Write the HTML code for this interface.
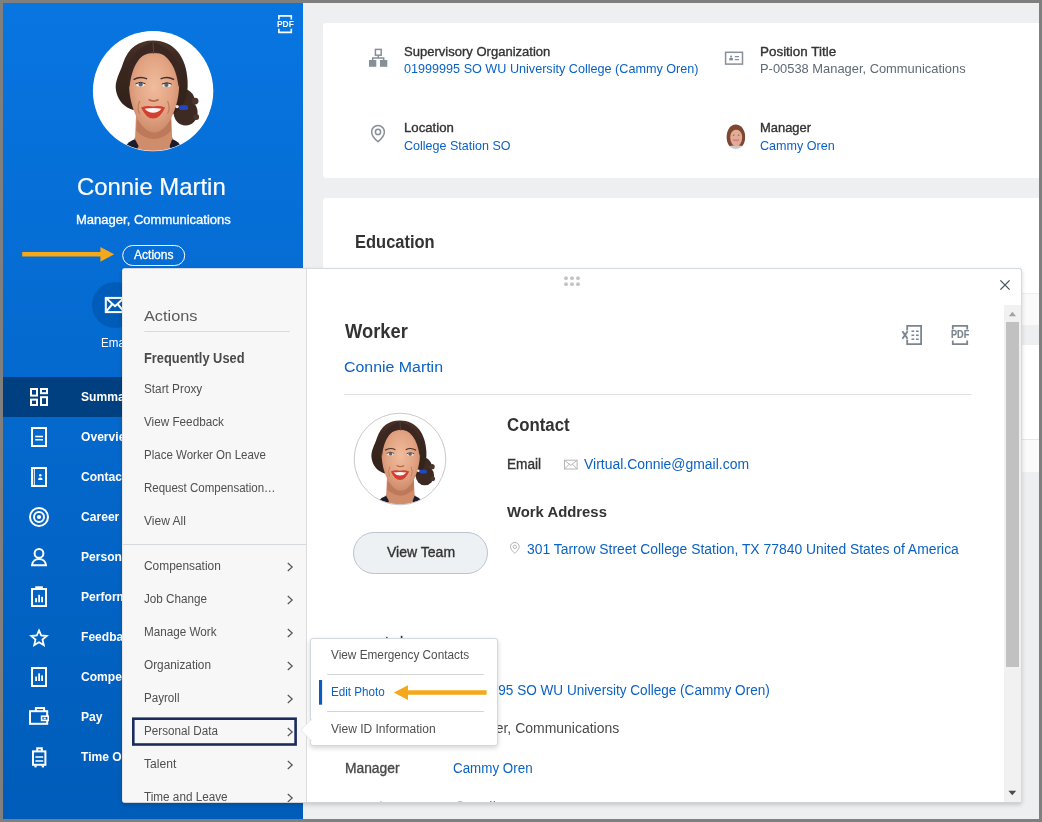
<!DOCTYPE html>
<html>
<head>
<meta charset="utf-8">
<title>Worker Profile</title>
<style>
*{box-sizing:border-box;margin:0;padding:0}
html,body{width:1042px;height:822px;overflow:hidden;background:#7f7f7f;font-family:"Liberation Sans",sans-serif;}
#frame{position:absolute;left:3px;top:3px;width:1036px;height:816px;overflow:hidden;background:#edeff1;}
.t{position:absolute;white-space:nowrap;line-height:1;display:inline-block;transform-origin:0 50%;}
.layer{position:absolute;left:0;top:0;}
svg{position:absolute;left:0;top:0;overflow:visible}
#side{position:absolute;left:0;top:0;width:300px;height:816px;background:linear-gradient(180deg,#0875e1 0%,#005cb9 100%);overflow:hidden}
.card{position:absolute;background:#fff;border-radius:3px 0 0 3px}
#pop{position:absolute;left:119px;top:265px;width:900px;height:535px;background:#fff;border-radius:3px;border:1px solid #d5dae0;border-left-color:#e9e7e6;border-bottom-color:#cfd2d6;box-shadow:0 2px 4px rgba(0,0,0,.17);overflow:hidden}
#menu{position:absolute;left:0;top:0;width:183px;height:533px;background:#f7f7f7;}
#menuline{position:absolute;left:183px;top:0;width:1px;height:533px;background:#dcdcdc}
#sub{position:absolute;left:307px;top:635px;width:188px;height:108px;background:#fff;border-radius:3px;border:1px solid #d4d9e0;box-shadow:0 2px 5px rgba(0,0,0,.17);}
#btn{position:absolute;left:230px;top:263px;width:135px;height:42px;border-radius:21px;background:#eef1f3;border:1px solid #bcc4cf}
</style>
</head>
<body>
<svg width="0" height="0" style="position:absolute">
  <defs>
    <filter id="soft" x="-10%" y="-10%" width="120%" height="120%"><feGaussianBlur stdDeviation="0.7"/></filter>
    <filter id="soft2" x="-10%" y="-10%" width="120%" height="120%"><feGaussianBlur stdDeviation="0.5"/></filter>
    <radialGradient id="sking" cx="50%" cy="42%" r="62%">
      <stop offset="0" stop-color="#f0bc9d"/><stop offset=".6" stop-color="#e2a382"/><stop offset="1" stop-color="#c98867"/>
    </radialGradient>
    <linearGradient id="hairg" x1="0" y1="0" x2="0" y2="1">
      <stop offset="0" stop-color="#4a3128"/><stop offset=".4" stop-color="#38261f"/><stop offset="1" stop-color="#33231d"/>
    </linearGradient>
    <clipPath id="cc"><circle cx="70" cy="70" r="59.6"/></clipPath>
    <symbol id="connie" viewBox="0 0 140 140">
      <g clip-path="url(#cc)">
        <rect width="140" height="140" fill="#fff"/>
        <g filter="url(#soft)">
          <!-- bun + wisps -->
          <ellipse cx="102.5" cy="91.5" rx="12" ry="13" fill="#3d2a22"/>
          <path d="M98 66 Q113 70 112 84 Q106 77 97 80Z" fill="#3d2a22"/>
          <circle cx="112" cy="80" r="3.4" fill="#4a342a"/>
          <circle cx="113" cy="96" r="3" fill="#4a342a"/>
          <!-- hair -->
          <path d="M70 19.5 C55 19.5 45 27 40 42 C37 52 31 60 33 70 C35 80 41 86 50 89 L90 93 C100 88 105.5 76 104.5 60 C103.5 36 91 19.5 70 19.5Z" fill="url(#hairg)"/>
          <!-- neck / chest -->
          <path d="M53 92 L52 116 L42 134 L100 134 L89 116 L88 92Z" fill="#d08d6c"/>
          <path d="M54 98 Q71 120 88 98 L88 110 Q71 126 53 110Z" fill="#b06c4e" opacity=".6"/>
          <!-- clothes -->
          <path d="M38 134 C41 125 46 119.5 52 118.5 L55.5 125 L51 134Z" fill="#1b1e2e"/>
          <path d="M102 134 C99 125 95 119.5 89 118.5 L86.5 125 L90 134Z" fill="#1b1e2e"/>
          <!-- face -->
          <path d="M71 32 C56 32 46 44 46 64 C46 85 57 111.5 71 111.5 C85 111.5 96 85 96 64 C96 44 86 32 71 32Z" fill="url(#sking)"/>
          <!-- hairline over forehead -->
          <path d="M70 30 C58 32 49 43 46.5 66 C41 52 44 30 70 21 C96 30 100 52 95.5 66 C93 43 83 32 70 30Z" fill="#3a2821"/>
          <path d="M70 21 L70.6 33" stroke="#6a4a3a" stroke-width=".8"/>
          <!-- brows / eyes -->
          <path d="M50.5 58.5 Q57 54.5 64 57.8" stroke="#4a2f25" stroke-width="1.5" fill="none"/>
          <path d="M77.5 57.8 Q84 54.5 91 58.5" stroke="#4a2f25" stroke-width="1.5" fill="none"/>
          <ellipse cx="57.3" cy="63.3" rx="4.3" ry="2.2" fill="#f3e9e4"/>
          <ellipse cx="83.6" cy="63.8" rx="4.3" ry="2.2" fill="#f3e9e4"/>
          <circle cx="57.6" cy="63.3" r="2.1" fill="#51677f"/>
          <circle cx="83.3" cy="63.8" r="2.1" fill="#51677f"/>
          <path d="M52.5 62.6 Q57.3 59.8 62.3 62.6" stroke="#3a2821" stroke-width="1" fill="none"/>
          <path d="M78.8 63 Q83.6 60.2 88.6 63" stroke="#3a2821" stroke-width="1" fill="none"/>
          <!-- nose + smile lines -->
          <path d="M65.5 78.5 Q70.5 81.5 75.5 78.5" stroke="#b06a4a" stroke-width="1.7" fill="none"/>
          <path d="M56.5 80 Q53.5 87 56.5 93" stroke="#c07c5c" stroke-width="1.2" fill="none"/>
          <path d="M84.5 80 Q87.5 87 84.5 93" stroke="#c07c5c" stroke-width="1.2" fill="none"/>
          <!-- mouth -->
          <path d="M58 86.3 Q64 84 70 85.3 Q76 84 82 86.3 Q77 97.5 70 97.5 Q63 97.5 58 86.3Z" fill="#d23f31"/>
          <path d="M61.5 87.6 Q70 86.4 78.5 87.6 Q75 91.6 70 91.6 Q65 91.6 61.5 87.6Z" fill="#fdf6f2"/>
          <!-- earring -->
          <rect x="96" y="84.2" width="9" height="4.8" rx="1.8" fill="#2447c0"/>
          <circle cx="94" cy="85.5" r="1.7" fill="#e9e9ee"/>
        </g>
      </g>
    </symbol>
    <symbol id="cammy" viewBox="0 0 20 26">
      <clipPath id="cm"><path d="M10 .6C15.4 .6 19.6 6 19.6 13.5C19.6 20 16 25.6 10 25.6C4 25.6 .6 20 .6 13.5C.6 6 4.6 .6 10 .6Z"/></clipPath>
      <g clip-path="url(#cm)"><g filter="url(#soft2)">
        <rect width="20" height="26" fill="#7d4730"/>
        <path d="M2 24 Q4 21.5 8 22 L12.5 22 Q16.5 21.5 18.5 24 L18.5 27 L2 27Z" fill="#c9c9cc"/>
        <ellipse cx="10.4" cy="13.6" rx="6.1" ry="9.2" fill="#e3ab93"/>
        <path d="M3.5 12 Q4.5 3.6 10.4 3.8 Q16 3.6 17.2 12 Q14.5 5.8 10.4 6 Q6.5 5.8 3.5 12Z" fill="#7d4730"/>
        <path d="M7.4 16.2 Q10.4 18.2 13.300 16.2 Q10.4 17 7.4 16.2Z" fill="#f2d8dc" stroke="#cf5f78" stroke-width=".7"/>
        <ellipse cx="7.8" cy="11.4" rx=".9" ry=".55" fill="#6a6f78"/><ellipse cx="12.9" cy="11.4" rx=".9" ry=".55" fill="#6a6f78"/>
      </g></g>
    </symbol>
  </defs>
</svg>

<div id="frame">

<!-- ===== background cards ===== -->
<div class="card" style="left:320px;top:20px;width:716px;height:155px;"></div>
<div class="card" style="left:320px;top:195px;width:716px;height:274px;">
  <div style="position:absolute;left:0;top:95px;width:716px;height:32px;background:#fafafa;border-top:1px solid #eceef0"></div>
  <div style="position:absolute;left:0;top:127px;width:716px;height:20px;background:#edeff1"></div>
  <div style="position:absolute;left:0;top:241px;width:716px;height:33px;background:#fafafa;border-top:1px solid #e6e8ea"></div>
</div>
<svg class="layer" width="1036" height="816" viewBox="3 3 1036 816">
  <g fill="none" stroke="#878f98" stroke-width="1.5">
    <!-- org icon -->
    <rect x="375.4" y="49.4" width="5.8" height="5.8"/>
    <path d="M378.3 56V58.1M372.7 60V58.1H383.7V60"/>
    <rect x="369" y="60" width="7.3" height="6.8" fill="#878f98" stroke="none"/>
    <rect x="380" y="60" width="7.3" height="6.8" fill="#878f98" stroke="none"/>
    <!-- location pin -->
    <path d="M378 141.6C378 141.6 371.6 136.4 371.6 131.9A6.4 6.4 0 0 1 384.4 131.9C384.4 136.4 378 141.6 378 141.6Z"/>
    <circle cx="378" cy="131.9" r="2.6"/>
    <!-- id card -->
    <rect x="725.6" y="52.3" width="16.9" height="11.8"/>
    <path d="M734.8 56.6H739M734.8 59.6H739" stroke-width="1.3"/>
    <rect x="729.2" y="58" width="3.8" height="2.4" fill="#878f98" stroke="none"/>
    <circle cx="731.1" cy="56.6" r="1.1" fill="#878f98" stroke="none"/>
  </g>
  <use href="#cammy" x="726" y="124" width="19.6" height="25.4"/>
</svg>
<span class="t" style="left:401.4px;top:42px;font-size:13px;color:#333;transform:scaleX(1.0023);-webkit-text-stroke:0.35px currentColor;">Supervisory Organization</span>
<span class="t" style="left:401.4px;top:59px;font-size:13px;color:#0b62c4;transform:scaleX(0.9705);">01999995 SO WU University College (Cammy Oren)</span>
<span class="t" style="left:757.2px;top:42px;font-size:13px;color:#333;transform:scaleX(1.0325);-webkit-text-stroke:0.35px currentColor;">Position Title</span>
<span class="t" style="left:757.2px;top:59px;font-size:13px;color:#5e6a75;transform:scaleX(0.9914);">P-00538 Manager, Communications</span>
<span class="t" style="left:401.4px;top:118px;font-size:13px;color:#333;transform:scaleX(1.0151);-webkit-text-stroke:0.35px currentColor;">Location</span>
<span class="t" style="left:401.4px;top:136px;font-size:13px;color:#0b62c4;transform:scaleX(0.9640);">College Station SO</span>
<span class="t" style="left:757.2px;top:118px;font-size:13px;color:#333;transform:scaleX(0.9939);-webkit-text-stroke:0.35px currentColor;">Manager</span>
<span class="t" style="left:757.2px;top:136px;font-size:13px;color:#0b62c4;transform:scaleX(0.9677);">Cammy Oren</span>
<span class="t" style="left:352.1px;top:230px;font-size:18px;color:#333;font-weight:bold;transform:scaleX(0.9159);">Education</span>

<!-- ===== sidebar ===== -->
<div id="side">
  <div style="position:absolute;left:0;top:374px;width:300px;height:40px;background:#004080"></div>
  <svg width="300" height="816" viewBox="3 3 300 816">
    <!-- avatar -->
    <circle cx="153.1" cy="91.1" r="60.2" fill="#fff"/>
    <use href="#connie" x="83.1" y="21.1" width="140" height="140"/>
    <!-- pdf icon -->
    <g fill="none" stroke="#fff" stroke-width="1.6">
      <path d="M278.9 19.6V15.9H291.3V19.6M278.9 28.8V32.4H291.3V28.8"/>
    </g>
    <!-- arrow 1 -->
    <path d="M22.2 252.1H100.4V247L114.2 254.3L100.4 261.7V256.6H22.2Z" fill="#f4a81a"/>
    <!-- actions pill -->
    <rect x="122.7" y="245.5" width="62" height="20" rx="10" fill="none" stroke="#fff" stroke-width="1"/>
    <!-- email circle -->
    <circle cx="115" cy="305" r="23" fill="#005cb9"/>
    <g fill="none" stroke="#fff" stroke-width="2">
      <rect x="105.8" y="297.9" width="18.4" height="14.2"/>
      <path d="M105.7 297.8L115 306.2L124.3 297.8M105.7 312.2L112.4 304M124.3 312.2L117.6 304"/>
    </g>
    <!-- nav icons -->
    <g fill="none" stroke="#fff" stroke-width="2">
      <!-- summary -->
      <rect x="31" y="389" width="6" height="6.6"/>
      <rect x="41" y="389" width="6" height="4.2"/>
      <rect x="31" y="399.6" width="6" height="5.4"/>
      <rect x="41" y="397.2" width="6" height="7.8"/>
      <!-- overview -->
      <rect x="32" y="428" width="14" height="18"/>
      <path d="M35.2 436.5H43M35.2 439.8H43" stroke-width="1.5"/>
      <!-- contact -->
      <rect x="32" y="468" width="14" height="18"/>
      <path d="M34.3 468V486" stroke-width="1"/>
      <!-- career -->
      <circle cx="39" cy="517" r="9"/>
      <circle cx="39" cy="517" r="5"/>
      <!-- personal -->
      <circle cx="39" cy="553.4" r="4.4"/>
      <path d="M32 565.2C32.8 556.9 45.2 556.9 46 565.2Z" stroke-linejoin="miter"/>
      <!-- performance -->
      <rect x="32" y="589" width="14" height="17"/>
      <!-- feedback star -->
      <path d="M39.0 630.4L41.2 635.5L46.7 636.0L42.5 639.6L43.8 645.1L39.0 642.2L34.2 645.1L35.5 639.6L31.3 636.0L36.8 635.5Z" stroke-width="1.8"/>
      <!-- compensation -->
      <rect x="32" y="668" width="14" height="18"/>
      <!-- pay -->
      <rect x="30" y="711.2" width="17.2" height="12.6"/>
      <path d="M35.9 711V708H44.1V711"/>
      <rect x="41.6" y="716.2" width="6.6" height="4.2" stroke-width="1.6" fill="#005fbe"/>
      <!-- time off -->
      <rect x="33" y="751.4" width="12.4" height="13.4"/>
      <path d="M37.2 751V748.2H41.8V751"/>
      <path d="M35.4 757H43.2M35.4 761H43.2" stroke-width="1.6"/>
    </g>
    <g fill="#fff">
      <circle cx="39" cy="517" r="2.1"/>
      <circle cx="40.3" cy="475.2" r="1.3"/>
      <path d="M38.2 480V478.6Q40.3 476.6 42.4 478.6V480Z"/>
      <rect x="35.2" y="586.3" width="7.6" height="3.2"/>
      <rect x="35.2" y="598.1" width="1.8" height="4.2"/><rect x="38.2" y="594.8" width="1.8" height="7.5"/><rect x="41.2" y="596.8" width="1.8" height="5.5"/>
      <rect x="35.2" y="676.6" width="1.8" height="4.4"/><rect x="38.2" y="673.4" width="1.8" height="7.6"/><rect x="41.2" y="675.4" width="1.8" height="5.6"/>
      <rect x="34.4" y="765.6" width="2.2" height="1.8"/><rect x="41.8" y="765.6" width="2.2" height="1.8"/>
      <rect x="43.6" y="717.6" width="2.2" height="1.6"/>
    </g>
  </svg>
<span class="t" style="left:74.3px;top:172px;font-size:24px;color:#fff;transform:scaleX(0.9953);-webkit-text-stroke:0.2px currentColor;">Connie Martin</span>
<span class="t" style="left:72.6px;top:210px;font-size:13px;color:#fff;transform:scaleX(1.0015);-webkit-text-stroke:0.3px currentColor;">Manager, Communications</span>
<span class="t" style="left:131.0px;top:246px;font-size:12px;color:#fff;transform:scaleX(1.0036);-webkit-text-stroke:0.3px currentColor;">Actions</span>
<span class="t" style="left:97.8px;top:334px;font-size:12px;color:#fff;transform:scaleX(0.9662);">Email</span>
<span class="t" style="left:273.8px;top:17px;font-size:8.4px;color:#fff;font-weight:bold;transform:scaleX(1.0030);">PDF</span>
<span class="t" style="left:78.2px;top:387px;font-size:13px;color:#fff;font-weight:bold;transform:scaleX(0.9300);">Summary</span>
<span class="t" style="left:78.2px;top:427px;font-size:13px;color:#fff;font-weight:bold;transform:scaleX(0.9300);">Overview</span>
<span class="t" style="left:78.2px;top:467px;font-size:13px;color:#fff;font-weight:bold;transform:scaleX(0.9300);">Contact</span>
<span class="t" style="left:78.2px;top:507px;font-size:13px;color:#fff;font-weight:bold;transform:scaleX(0.9300);">Career</span>
<span class="t" style="left:78.2px;top:547px;font-size:13px;color:#fff;font-weight:bold;transform:scaleX(0.9300);">Personal</span>
<span class="t" style="left:78.2px;top:587px;font-size:13px;color:#fff;font-weight:bold;transform:scaleX(0.9300);">Performance</span>
<span class="t" style="left:78.2px;top:627px;font-size:13px;color:#fff;font-weight:bold;transform:scaleX(0.9300);">Feedback</span>
<span class="t" style="left:78.2px;top:667px;font-size:13px;color:#fff;font-weight:bold;transform:scaleX(0.9300);">Compensation</span>
<span class="t" style="left:78.2px;top:707px;font-size:13px;color:#fff;font-weight:bold;transform:scaleX(0.9300);">Pay</span>
<span class="t" style="left:78.2px;top:747px;font-size:13px;color:#fff;font-weight:bold;transform:scaleX(0.9300);">Time Off</span>
</div>

<!-- ===== actions popup ===== -->
<div id="pop">
  <div id="menu"></div>
  <div id="menuline"></div>
  <div id="btn"></div>
  <svg width="898" height="533" viewBox="123 269 898 533">
    <!-- menu lines -->
    <path d="M144.4 331.5H290" stroke="#dadada" stroke-width="1"/>
    <path d="M122 544.5H306" stroke="#d6d9dc" stroke-width="1"/>
    <!-- chevrons -->
    <g fill="none" stroke="#555" stroke-width="1.2">
      <path d="M287.8 563L292.2 567L287.8 571"/>
      <path d="M287.8 596L292.2 600L287.8 604"/>
      <path d="M287.8 629L292.2 633L287.8 637"/>
      <path d="M287.8 662L292.2 666L287.8 670"/>
      <path d="M287.8 695L292.2 699L287.8 703"/>
      <path d="M287.8 728L292.2 732L287.8 736"/>
      <path d="M287.8 761L292.2 765L287.8 769"/>
      <path d="M287.8 794L292.2 798L287.8 802"/>
    </g>
    <!-- focus box -->
    <rect x="133.3" y="718.7" width="162.3" height="25.8" fill="none" stroke="#1b2b5c" stroke-width="2.6"/>
    <!-- drag dots -->
    <g fill="#c4c4c4">
      <circle cx="566" cy="278.2" r="1.9"/><circle cx="572" cy="278.2" r="1.9"/><circle cx="578" cy="278.2" r="1.9"/>
      <circle cx="566" cy="284.2" r="1.9"/><circle cx="572" cy="284.2" r="1.9"/><circle cx="578" cy="284.2" r="1.9"/>
    </g>
    <!-- close X -->
    <path d="M1000.4 280.4L1009.6 289.6M1009.6 280.4L1000.4 289.6" stroke="#48525e" stroke-width="1.3" fill="none"/>
    <!-- scrollbar -->
    <rect x="1004" y="305" width="17" height="497" fill="#f1f1f1"/>
    <rect x="1006" y="322" width="13" height="345" fill="#c1c1c1"/>
    <path d="M1008.8 316.3H1016L1012.4 311.8Z" fill="#a3a3a3"/>
    <path d="M1008.4 790.8H1016.2L1012.3 795.2Z" fill="#4d4d4d"/>
    <rect x="490.2" y="801" width="1.3" height="1" fill="#3f7fd0"/><rect x="493.7" y="801" width="1.3" height="1" fill="#3f7fd0"/>
    <rect x="386" y="636.8" width="1.6" height="1.2" fill="#555"/><rect x="400.8" y="635.8" width="1.6" height="2.2" fill="#333"/>
    <!-- header rule -->
    <path d="M344 394.5H971.5" stroke="#dfe3e8" stroke-width="1"/>
    <!-- excel icon -->
    <g fill="none" stroke="#7b858f" stroke-width="1.8">
      <path d="M907.2 330.4V325.8H921.1V344.2H907.2V339.6"/>
      <path d="M911.5 331.3H914.2M916 331.3H918.7M911.5 335.2H914.2M916 335.2H918.7M911.5 339.2H914.2M916 339.2H918.7" stroke-width="1.6"/>
      <path d="M902.4 331.2L907.6 338.8M907.6 331.2L902.4 338.8" stroke-width="1.9"/>
      <!-- pdf icon -->
      <path d="M952.8 329.6V325.8H967.2V329.6M952.8 340.4V344.2H967.2V340.4"/>
    </g>
    <!-- photo -->
    <use href="#connie" x="346.5" y="405.5" width="107" height="107"/>
    <circle cx="400" cy="459" r="45.8" fill="none" stroke="#c9c9c9" stroke-width="1"/>
    <!-- small envelope -->
    <g fill="none" stroke="#b5b5b5" stroke-width="1">
      <rect x="564.5" y="460.2" width="12.6" height="8.8"/>
      <path d="M564.5 460.2L570.8 465.4L577.1 460.2M564.5 469L569.2 464.2M577.1 469L572.4 464.2"/>
      <!-- small pin -->
      <path d="M514.8 553.4C514.8 553.4 510.4 549.6 510.4 546.8A4.4 4.4 0 0 1 519.2 546.8C519.2 549.6 514.8 553.4 514.8 553.4Z"/>
      <circle cx="514.8" cy="546.8" r="1.7"/>
      <path d="M460.1 812.4C460.1 812.4 455.7 808.6 455.7 805.8A4.4 4.4 0 0 1 464.5 805.8C464.5 808.6 460.1 812.4 460.1 812.4Z"/>
    </g>
  </svg>
<span class="t" style="left:21.4px;top:39px;font-size:15px;color:#5a5a5a;transform:scaleX(1.0853);">Actions</span>
<span class="t" style="left:21.4px;top:82px;font-size:14px;color:#4a4a4a;font-weight:bold;transform:scaleX(0.9161);">Frequently Used</span>
<span class="t" style="left:21.4px;top:114px;font-size:12px;color:#4f4f4f;transform:scaleX(0.9805);">Start Proxy</span>
<span class="t" style="left:21.4px;top:147px;font-size:12px;color:#4f4f4f;transform:scaleX(0.9764);">View Feedback</span>
<span class="t" style="left:21.4px;top:180px;font-size:12px;color:#4f4f4f;transform:scaleX(0.9593);">Place Worker On Leave</span>
<span class="t" style="left:21.4px;top:213px;font-size:12px;color:#4f4f4f;transform:scaleX(0.9576);">Request Compensation…</span>
<span class="t" style="left:21.4px;top:246px;font-size:12px;color:#4f4f4f;transform:scaleX(1.0021);">View All</span>
<span class="t" style="left:21.4px;top:291px;font-size:12px;color:#4f4f4f;transform:scaleX(0.9924);">Compensation</span>
<span class="t" style="left:21.4px;top:324px;font-size:12px;color:#4f4f4f;transform:scaleX(0.9734);">Job Change</span>
<span class="t" style="left:21.4px;top:357px;font-size:12px;color:#4f4f4f;transform:scaleX(0.9747);">Manage Work</span>
<span class="t" style="left:21.4px;top:390px;font-size:12px;color:#4f4f4f;transform:scaleX(0.9846);">Organization</span>
<span class="t" style="left:21.4px;top:423px;font-size:12px;color:#4f4f4f;transform:scaleX(0.9676);">Payroll</span>
<span class="t" style="left:21.4px;top:456px;font-size:12px;color:#4f4f4f;transform:scaleX(0.9731);">Personal Data</span>
<span class="t" style="left:21.4px;top:489px;font-size:12px;color:#4f4f4f;transform:scaleX(1.0084);">Talent</span>
<span class="t" style="left:21.4px;top:522px;font-size:12px;color:#4f4f4f;transform:scaleX(0.9765);">Time and Leave</span>
<span class="t" style="left:827.9px;top:61px;font-size:10.2px;color:#7b858f;font-weight:bold;transform:scaleX(0.8982);-webkit-text-stroke:0.2px currentColor;">PDF</span>
<span class="t" style="left:222.0px;top:52px;font-size:20px;color:#333;font-weight:bold;transform:scaleX(0.9162);">Worker</span>
<span class="t" style="left:221.4px;top:90px;font-size:15.5px;color:#0b62c4;transform:scaleX(1.0259);">Connie Martin</span>
<span class="t" style="left:384.1px;top:147px;font-size:18px;color:#333;font-weight:bold;transform:scaleX(0.9343);">Contact</span>
<span class="t" style="left:384.1px;top:188px;font-size:14px;color:#333;transform:scaleX(0.9739);-webkit-text-stroke:0.35px currentColor;">Email</span>
<span class="t" style="left:461.2px;top:188px;font-size:14px;color:#0b62c4;transform:scaleX(0.9958);">Virtual.Connie@gmail.com</span>
<span class="t" style="left:384.1px;top:235px;font-size:15.5px;color:#333;font-weight:bold;transform:scaleX(0.9584);">Work Address</span>
<span class="t" style="left:403.7px;top:273px;font-size:14px;color:#0b62c4;transform:scaleX(0.9920);">301 Tarrow Street College Station, TX 77840 United States of America</span>
<span class="t" style="left:263.5px;top:276px;font-size:14px;color:#333;transform:scaleX(1.0015);-webkit-text-stroke:0.35px currentColor;">View Team</span>
<span class="t" style="left:222.0px;top:372px;font-size:18px;color:#333;font-weight:bold;transform:scaleX(0.9300);">Job Details</span>
<span class="t" style="left:221.8px;top:414px;font-size:14px;color:#494949;transform:scaleX(1.0015);-webkit-text-stroke:0.35px currentColor;">Organization</span>
<span class="t" style="left:329.5px;top:414px;font-size:14px;color:#0b62c4;transform:scaleX(0.9695);">01999995 SO WU University College (Cammy Oren)</span>
<span class="t" style="left:221.8px;top:452px;font-size:14px;color:#494949;transform:scaleX(1.0015);-webkit-text-stroke:0.35px currentColor;">Position</span>
<span class="t" style="left:329.5px;top:452px;font-size:14px;color:#4a4a4a;transform:scaleX(0.9980);">Manager, Communications</span>
<span class="t" style="left:221.8px;top:492px;font-size:14px;color:#494949;transform:scaleX(0.9861);-webkit-text-stroke:0.35px currentColor;">Manager</span>
<span class="t" style="left:329.5px;top:492px;font-size:14px;color:#0b62c4;transform:scaleX(0.9563);">Cammy Oren</span>
<span class="t" style="left:221.8px;top:532px;font-size:14px;color:#494949;transform:scaleX(1.0015);-webkit-text-stroke:0.35px currentColor;">Location</span>
</div>

<!-- ===== submenu ===== -->
<div id="sub">
  <svg width="186" height="106" viewBox="311 639 186 106">
    <path d="M311.6 719.2L300.8 730.1L311.6 741Z" fill="#fff" stroke="#e3e5e8" stroke-width=".8"/>
    <rect x="311" y="720.4" width="2" height="19.4" fill="#fff"/>
    <path d="M327.1 674.5H483.8M327.1 711.5H483.8" stroke="#d4d4d4" stroke-width="1"/>
    <rect x="319" y="680" width="3.1" height="24.7" fill="#0b5cc0"/>
    <path d="M486.6 690.3H408V685.2L393.8 692.6L408 700V694.8H486.6Z" fill="#f4a81a"/>
  </svg>
<span class="t" style="left:19.5px;top:10px;font-size:12px;color:#4f4f4f;transform:scaleX(0.9828);">View Emergency Contacts</span>
<span class="t" style="left:19.5px;top:47px;font-size:12px;color:#0b62c4;transform:scaleX(0.9716);">Edit Photo</span>
<span class="t" style="left:19.5px;top:84px;font-size:12px;color:#4f4f4f;transform:scaleX(1.0015);">View ID Information</span>
</div>

</div>
</body>
</html>
